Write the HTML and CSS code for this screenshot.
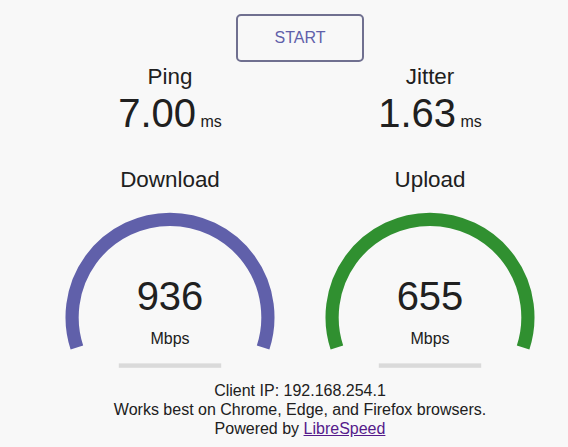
FILE: index.html
```html
<!DOCTYPE html>
<html>
<head>
	<meta charset="UTF-8">
	<title>LibreSpeed</title>
	<link rel="stylesheet" href="styles.css">
</head>
<body>
	<div class="wrap">
		<div class="start-btn">START</div>

		<div class="group stats">
			<div class="stat">
				<div class="test-name">Ping</div>
				<div class="stat-line">7.00<span class="unit"> ms</span></div>
			</div>
			<div class="stat">
				<div class="test-name">Jitter</div>
				<div class="stat-line">1.63<span class="unit"> ms</span></div>
			</div>
		</div>

		<div class="group meters">
			<div class="stat">
				<div class="test-name">Download</div>
				<div class="meter">
					<svg class="gauge" width="256" height="200" viewBox="0 0 256 200">
						<path d="M34.89 166.45 A97.9 97.9 0 1 1 221.11 166.45" fill="none" stroke="#6060aa" stroke-width="13.2"/>
						<rect x="76.8" y="182.4" width="102.4" height="4.4" fill="#dadada"/>
					</svg>
					<div class="meter-value">936</div>
					<div class="meter-unit">Mbps</div>
				</div>
			</div>
			<div class="stat">
				<div class="test-name">Upload</div>
				<div class="meter">
					<svg class="gauge" width="256" height="200" viewBox="0 0 256 200">
						<path d="M34.89 166.45 A97.9 97.9 0 1 1 221.11 166.45" fill="none" stroke="#309030" stroke-width="13.2"/>
						<rect x="76.8" y="182.4" width="102.4" height="4.4" fill="#dadada"/>
					</svg>
					<div class="meter-value">655</div>
					<div class="meter-unit">Mbps</div>
				</div>
			</div>
		</div>

		<div class="footer">
			<div>Client IP: 192.168.254.1</div>
			<div>Works best on Chrome, Edge, and Firefox browsers.</div>
			<div>Powered by <a href="#">LibreSpeed</a></div>
		</div>
	</div>
</body>
</html>
```

FILE: styles.css
```css
html,body{
	margin:0;
	padding:0;
	background:#f8f8f8;
	color:#202020;
}
body{
	font-family:"Liberation Sans",Arial,sans-serif;
	font-size:16px;
}
.wrap{
	box-sizing:border-box;
	width:568px;
	padding:14px 0 0 32px;
	text-align:center;
}
.start-btn{
	box-sizing:border-box;
	width:128px;
	height:48px;
	margin:0 auto;
	line-height:43.2px;
	border:2.4px solid #707090;
	border-radius:5px;
	color:#6060aa;
}
.group{
	display:flex;
	justify-content:center;
	gap:4px;
}
.stats{
	margin-top:1.5px;
}
.meters{
	margin-top:31px;
}
.stat{
	width:256px;
}
.test-name{
	font-size:22.4px;
	line-height:26px;
}
.stat-line{
	font-size:40px;
	line-height:46px;
}
.unit{
	font-size:16px;
	line-height:16px;
}
.meter{
	position:relative;
	width:256px;
	height:200px;
	margin-top:-12px;
}
.gauge{
	display:block;
}
.meter-value{
	position:absolute;
	left:0;
	bottom:62px;
	width:100%;
	font-size:40px;
	line-height:46px;
}
.meter-unit{
	position:absolute;
	left:0;
	bottom:32px;
	width:100%;
	line-height:18.4px;
}
.footer{
	line-height:19px;
}
.footer a{
	color:#551a8b;
}
```
